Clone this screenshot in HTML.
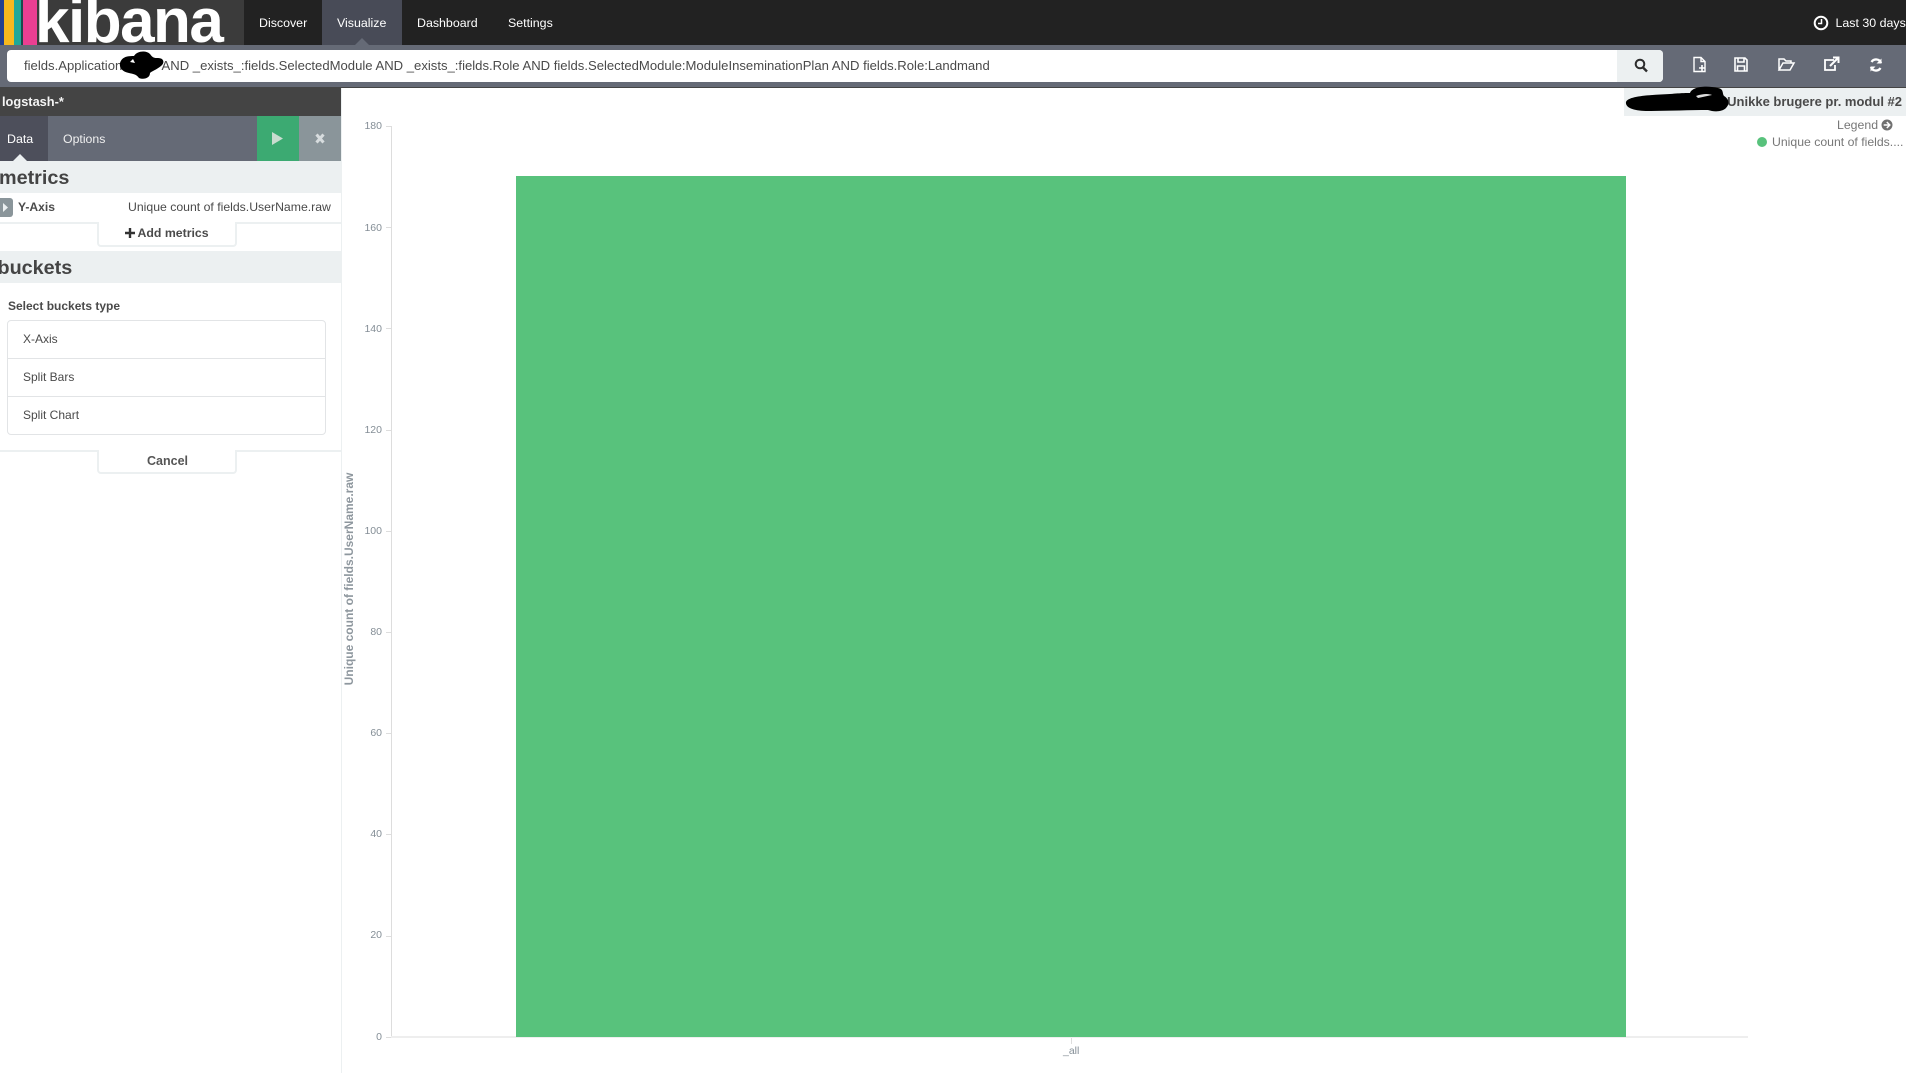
<!DOCTYPE html>
<html><head><meta charset="utf-8"><style>
*{box-sizing:border-box}
html,body{margin:0;padding:0;width:1906px;height:1073px;overflow:hidden;background:#fff;font-family:"Liberation Sans",sans-serif}
.a{position:absolute;white-space:nowrap}
.t{color:#fff;font-size:12.4px;line-height:14px;top:16px}
.yt{font-size:10.5px;color:#848e96;width:30px;text-align:right;left:352px;line-height:12px}
.tk{left:386px;width:5px;height:1px;background:#ddd}
.li{left:23px;font-size:12px;color:#4a4a4a;line-height:14px}
</style></head><body>
<div class="a" style="left:0;top:0;width:1906px;height:45px;background:#222"></div>
<div class="a" style="left:0;top:0;width:244px;height:45px;background:#3b3b3b;overflow:hidden">
<div class="a" style="left:0;top:0;width:4px;height:45px;background:#23408f"></div>
<div class="a" style="left:4px;top:0;width:10px;height:45px;background:#f6b81e"></div>
<div class="a" style="left:14px;top:0;width:7px;height:45px;background:#1fa898"></div>
<div class="a" style="left:21px;top:0;width:2px;height:45px;background:#1c4a4a"></div>
<div class="a" style="left:23px;top:0;width:14px;height:45px;background:#ea3f92"></div>
<div class="a" style="left:35px;top:-13px;font-size:62px;line-height:70px;font-weight:bold;color:#fff;letter-spacing:-1.5px">kibana</div>
</div>
<div class="a" style="left:322px;top:0;width:80px;height:45px;background:#484b57"></div>
<div class="a t" style="left:259px">Discover</div>
<div class="a t" style="left:337px">Visualize</div>
<div class="a t" style="left:417px">Dashboard</div>
<div class="a t" style="left:508px">Settings</div>
<svg class="a" style="left:1812px;top:14px" width="18" height="18" viewBox="0 0 18 18"><circle cx="9" cy="9" r="6.300" fill="none" stroke="#fff" stroke-width="2"/><path d="M9.500 5V9.500H6" fill="none" stroke="#fff" stroke-width="1.500"/></svg>
<div class="a t" style="left:1835.500px">Last 30 days</div>

<div class="a" style="left:0;top:45px;width:1906px;height:42px;background:#656a76"></div>
<div class="a" style="left:0;top:87px;width:1906px;height:1px;background:#444"></div>
<svg class="a" style="left:354px;top:38px" width="16" height="8"><path d="M0 8L8 0L16 8Z" fill="#656a76"/></svg>
<div class="a" style="left:7px;top:50px;width:1656px;height:32px;background:#fff;border-radius:4px"></div>
<div class="a" style="left:1617px;top:50px;width:46px;height:32px;background:#ecf0f1;border-radius:0 4px 4px 0"></div>
<svg class="a" style="left:1634px;top:58px" width="14" height="15" viewBox="0 0 14 15"><circle cx="6" cy="6" r="4.300" fill="none" stroke="#2d2d2d" stroke-width="2"/><path d="M9 9.500L13 13.500" stroke="#2d2d2d" stroke-width="2.400"/></svg>
<div class="a" style="left:24px;top:58px;font-size:13.100px;line-height:15px;color:#4a4a4a">fields.Application:</div>
<div class="a" style="left:161.500px;top:58px;font-size:13.100px;line-height:15px;color:#4a4a4a">AND _exists_:fields.SelectedModule AND _exists_:fields.Role AND fields.SelectedModule:ModuleInseminationPlan AND fields.Role:Landmand</div>
<svg class="a" style="left:114px;top:45px" width="55" height="40" viewBox="0 0 55 40"><path d="M6 18C8 11 15 11 20 11C23 6 32 5 36 9C39 13 40 13 44 13C50 13 51 18 47 21C42 25 38 26 36 28C36 33 30 35 25 33C22 29 19 29 15 28C9 27 5 23 6 18Z" fill="#000"/><path d="M16 17l3-3 2 4z" fill="#fff"/></svg>
<!-- toolbar icons -->
<svg class="a" style="left:1691px;top:55px" width="200" height="20" viewBox="0 0 200 20" fill="none" stroke="#fff" stroke-width="1.500">
<path d="M3 2.500H10L14 6.500V16.500H3ZM10 2.500V6.500H14" stroke-width="1.400"/><path d="M8 13H14M11 10V16" stroke-width="1.600"/>
<path d="M44 3H54L56 5V16H44ZM47 3V7H53V3M46.500 16V11H53.500V16" stroke-width="1.600"/>
<path d="M88 15V4H93L95 6H100V8M88 15L92 8H103L99 15Z"/>
<path d="M143 5H134V15H144V10" stroke-width="1.800"/><path d="M139 11L147 3M142 2.500H147.500V8" stroke-width="2"/>
<path d="M190 8C189 4 183 3 180.500 7M180 12C181 16 187 17 189.500 13" stroke-width="2.300"/><path d="M190.500 3.500V8.500H185.500Z M179.500 16.500V11.500H184.500Z" fill="#fff" stroke="none"/>
</svg>

<!-- sidebar -->
<div class="a" style="left:0;top:88px;width:341px;height:28px;background:#444"></div>
<div class="a" style="left:2px;top:94px;font-size:12.800px;line-height:15px;font-weight:bold;color:#f4f4f4">logstash-*</div>
<div class="a" style="left:0;top:116px;width:341px;height:45px;background:#656a76"></div>
<div class="a" style="left:0;top:116px;width:48px;height:45px;background:#4d4f5b"></div>
<div class="a" style="left:257px;top:116px;width:42px;height:45px;background:#3caa72"></div>
<div class="a" style="left:299px;top:116px;width:42px;height:45px;background:#8a959a"></div>
<svg class="a" style="left:272px;top:132px" width="12" height="14"><path d="M0 0L11 6.500L0 13Z" fill="#c8dccf"/></svg>
<svg class="a" style="left:315px;top:133px" width="10" height="11"><path d="M1.500 1.500L8.500 9.500M8.500 1.500L1.500 9.500" stroke="#d7dcde" stroke-width="3"/></svg>
<div class="a" style="left:7px;top:132px;font-size:12.400px;line-height:14px;color:#fff">Data</div>
<div class="a" style="left:63px;top:132px;font-size:12.300px;line-height:14px;color:#f0f0f0">Options</div>
<svg class="a" style="left:12px;top:154px" width="16" height="8"><path d="M0 8L8 0L16 8Z" fill="#ecf0f1"/></svg>

<div class="a" style="left:0;top:161px;width:341px;height:32px;background:#ecf0f1"></div>
<div class="a" style="left:-1px;top:166.500px;font-size:19.800px;line-height:23px;font-weight:bold;color:#444">metrics</div>
<div class="a" style="left:0;top:198px;width:13px;height:19px;background:#8a959a;border-radius:0 3px 3px 0"></div>
<svg class="a" style="left:3px;top:203px" width="6" height="9"><path d="M0 0L5 4.500L0 9Z" fill="#ecf0f1"/></svg>
<div class="a" style="left:18px;top:200px;font-size:12.100px;line-height:14px;font-weight:bold;color:#4a4a4a">Y-Axis</div>
<div class="a" style="left:128px;top:200px;font-size:12.250px;line-height:14px;color:#4a4a4a">Unique count of fields.UserName.raw</div>
<div class="a" style="left:0;top:222px;width:341px;height:2px;background:#ecf0f1"></div>
<div class="a" style="left:97px;top:222px;width:140px;height:25px;background:#fff;border:2px solid #ecf0f1;border-top:0;border-radius:0 0 4px 4px"></div>
<svg class="a" style="left:125px;top:228px" width="10" height="10"><path d="M5 0V10M0 5H10" stroke="#333" stroke-width="2.400"/></svg>
<div class="a" style="left:137.500px;top:226px;font-size:12.300px;line-height:14px;font-weight:bold;color:#4a4a4a">Add metrics</div>

<div class="a" style="left:0;top:251px;width:341px;height:32px;background:#ecf0f1"></div>
<div class="a" style="left:-2.500px;top:257px;font-size:19.800px;line-height:23px;font-weight:bold;color:#444">buckets</div>
<div class="a" style="left:8px;top:299px;font-size:12px;line-height:14px;font-weight:bold;color:#4a4a4a">Select buckets type</div>
<div class="a" style="left:7px;top:320px;width:319px;height:115px;border:1px solid #e2e4e6;border-radius:4px"></div>
<div class="a" style="left:8px;top:358px;width:317px;height:1px;background:#e2e4e6"></div>
<div class="a" style="left:8px;top:396px;width:317px;height:1px;background:#e2e4e6"></div>
<div class="a li" style="top:332px">X-Axis</div>
<div class="a li" style="top:370px">Split Bars</div>
<div class="a li" style="top:408px">Split Chart</div>
<div class="a" style="left:0;top:450px;width:341px;height:2px;background:#ecf0f1"></div>
<div class="a" style="left:97px;top:450px;width:140px;height:24px;background:#fff;border:2px solid #ecf0f1;border-top:0;border-radius:0 0 4px 4px"></div>
<div class="a" style="left:147px;top:454px;font-size:12.500px;line-height:14px;font-weight:bold;color:#555">Cancel</div>
<div class="a" style="left:341px;top:88px;width:1px;height:985px;background:#ecf0f1"></div>

<!-- chart -->
<div class="a" style="left:391px;top:126px;width:1px;height:911px;background:#ddd"></div>
<div class="a" style="left:391px;top:1036px;width:1357px;height:2px;background:#eee"></div>
<div class="a" style="left:516px;top:176px;width:1110px;height:861px;background:#58c27c"></div>
<div class="a tk" style="top:126px"></div><div class="a yt" style="top:120px">180</div>
<div class="a tk" style="top:227px"></div><div class="a yt" style="top:222px">160</div>
<div class="a tk" style="top:328px"></div><div class="a yt" style="top:323px">140</div>
<div class="a tk" style="top:430px"></div><div class="a yt" style="top:424px">120</div>
<div class="a tk" style="top:531px"></div><div class="a yt" style="top:525px">100</div>
<div class="a tk" style="top:632px"></div><div class="a yt" style="top:626px">80</div>
<div class="a tk" style="top:733px"></div><div class="a yt" style="top:727px">60</div>
<div class="a tk" style="top:834px"></div><div class="a yt" style="top:828px">40</div>
<div class="a tk" style="top:936px"></div><div class="a yt" style="top:929px">20</div>
<div class="a tk" style="top:1037px"></div><div class="a yt" style="top:1031px">0</div>
<div class="a" style="left:1071px;top:1038px;width:1px;height:6px;background:#ddd"></div>
<div class="a" style="left:1063px;top:1045px;font-size:10.500px;line-height:12px;color:#848e96">_all</div>
<div class="a" style="left:349px;top:578.500px;transform:translate(-50%,-50%) rotate(-90deg);font-size:12px;line-height:14px;font-weight:bold;color:#8e979e">Unique count of fields.UserName.raw</div>

<!-- title + legend -->
<div class="a" style="left:1624px;top:88px;width:282px;height:28px;background:#ecf0f1"></div>
<div class="a" style="right:4px;top:94px;font-size:13px;line-height:15px;font-weight:bold;color:#4a4a4a">Unikke brugere pr. modul #2</div>
<svg class="a" style="left:1620px;top:82px" width="115" height="36" viewBox="0 0 115 36"><path d="M6 20C8 14 30 13 50 12C62 11 66 11 70 11C72 5 85 3 98 6C104 7 102 11 104 14C109 17 110 22 106 26C102 30 94 30 88 28C70 28 45 29 28 29C15 29 5 26 6 20Z" fill="#000"/><path d="M76 14C84 11 90 12 92 13L78 16Z" fill="#ddd"/></svg>
<div class="a" style="left:1837px;top:118px;font-size:12.300px;line-height:14px;color:#777">Legend</div>
<svg class="a" style="left:1881px;top:119px" width="12" height="12"><circle cx="6" cy="6" r="5.500" fill="#707070"/><path d="M2.700 6H8.500M5.800 3L8.800 6L5.800 9" fill="none" stroke="#fff" stroke-width="1.500"/></svg>
<div class="a" style="left:1757px;top:137px;width:10px;height:10px;border-radius:50%;background:#58c27c"></div>
<div class="a" style="left:1772px;top:135px;font-size:12.250px;line-height:14px;color:#777">Unique count of fields....</div>
</body></html>
